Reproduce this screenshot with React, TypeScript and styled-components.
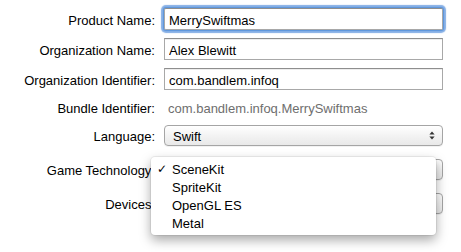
import styled, { createGlobalStyle } from "styled-components";

const GlobalStyle = createGlobalStyle`
  html, body, #root {
    margin: 0;
    padding: 0;
    min-height: 100vh;
    background: #fff;
  }
  body {
    font-family: "Liberation Sans", Arial, sans-serif;
    font-size: 13px;
    color: #000;
  }
`;

const menuItems = ["SceneKit", "SpriteKit", "OpenGL ES", "Metal"];

export default function App() {
  return (
    <>
      <GlobalStyle />
      <Form>
        <Row $h={22} $mt={0}>
          <Label>Product Name:</Label>
          <TextField $focused defaultValue="MerrySwiftmas" />
        </Row>
        <Row $h={22} $mt={8}>
          <Label>Organization Name:</Label>
          <TextField defaultValue="Alex Blewitt" />
        </Row>
        <Row $h={22} $mt={8}>
          <Label>Organization Identifier:</Label>
          <TextField defaultValue="com.bandlem.infoq" />
        </Row>
        <Row $h={19} $mt={8}>
          <Label>Bundle Identifier:</Label>
          <StaticValue>com.bandlem.infoq.MerrySwiftmas</StaticValue>
        </Row>
        <Row $h={21} $mt={8}>
          <Label>Language:</Label>
          <Popup>
            <span>Swift</span>
            <Arrows />
          </Popup>
        </Row>
        <Row $h={21} $mt={13}>
          <Label>Game Technology:</Label>
          <FieldCell>
            <Popup>
              <span>SceneKit</span>
              <Arrows />
            </Popup>
            <Menu>
              {menuItems.map((item, i) => (
                <MenuItem key={item}>
                  <Check>{i === 0 ? "✓" : ""}</Check>
                  <span>{item}</span>
                </MenuItem>
              ))}
            </Menu>
          </FieldCell>
        </Row>
        <Row $h={21} $mt={13}>
          <Label>Devices:</Label>
          <Popup>
            <span>Universal</span>
            <Arrows />
          </Popup>
        </Row>
      </Form>
    </>
  );
}

function Arrows() {
  return (
    <ArrowIcon width="6" height="9" viewBox="0 0 6 9">
      <path d="M3 0.5 L5.6 3.4 L0.4 3.4 Z" fill="#333" />
      <path d="M3 8.5 L5.6 5.6 L0.4 5.6 Z" fill="#333" />
    </ArrowIcon>
  );
}

const Form = styled.div`
  display: flex;
  flex-direction: column;
  padding-top: 8px;
`;

const Row = styled.div<{ $h: number; $mt: number }>`
  display: grid;
  grid-template-columns: 155px 279px;
  column-gap: 9px;
  align-items: center;
  height: ${(p) => p.$h}px;
  margin-top: ${(p) => p.$mt}px;
`;

const Label = styled.div`
  text-align: right;
  white-space: nowrap;
  color: #000;
  padding-top: 2px;
`;

const TextField = styled.input<{ $focused?: boolean }>`
  box-sizing: border-box;
  width: 279px;
  height: 22px;
  margin: 0;
  padding: 2px 0 0 4px;
  font-family: "Liberation Sans", Arial, sans-serif;
  font-size: 13px;
  color: #000;
  background: #fff;
  border: 1px solid #a8a8a8;
  border-top-color: #8e8e8e;
  border-radius: ${(p) => (p.$focused ? "2px" : "0")};
  outline: none;
  box-shadow: ${(p) =>
    p.$focused
      ? "0 0 0 1px #5f97dc, 0 0 1px 3px rgba(110, 160, 225, 0.85)"
      : "inset 0 1px 0 #ededed"};
`;

const StaticValue = styled.div`
  color: #6e6e6e;
  padding: 2px 0 0 4px;
  white-space: nowrap;
`;

const FieldCell = styled.div`
  position: relative;
  z-index: 5;
  height: 21px;
`;

const Popup = styled.div`
  box-sizing: border-box;
  display: flex;
  align-items: center;
  justify-content: space-between;
  width: 279px;
  height: 21px;
  padding: 1px 7px 0 8px;
  border: 1px solid #a5a5a5;
  border-radius: 4px;
  background: linear-gradient(#ffffff, #f1f1f1 60%, #e9e9e9);
  box-shadow: 0 1px 0 rgba(0, 0, 0, 0.05);
  color: #000;
`;

const ArrowIcon = styled.svg`
  display: block;
  margin-top: -1px;
`;

const Menu = styled.div`
  position: absolute;
  left: -13px;
  top: -2px;
  width: 285px;
  box-sizing: border-box;
  padding: 3px 0;
  background: #fff;
  border-radius: 4px;
  box-shadow: 0 0 0 1px rgba(0, 0, 0, 0.06), 0 5px 12px rgba(0, 0, 0, 0.35);
  z-index: 10;
`;

const MenuItem = styled.div`
  display: flex;
  align-items: center;
  height: 18px;
  padding-left: 6px;
  color: #000;
`;

const Check = styled.span`
  display: inline-block;
  width: 15px;
  font-family: "DejaVu Sans", sans-serif;
  font-size: 12px;
`;
